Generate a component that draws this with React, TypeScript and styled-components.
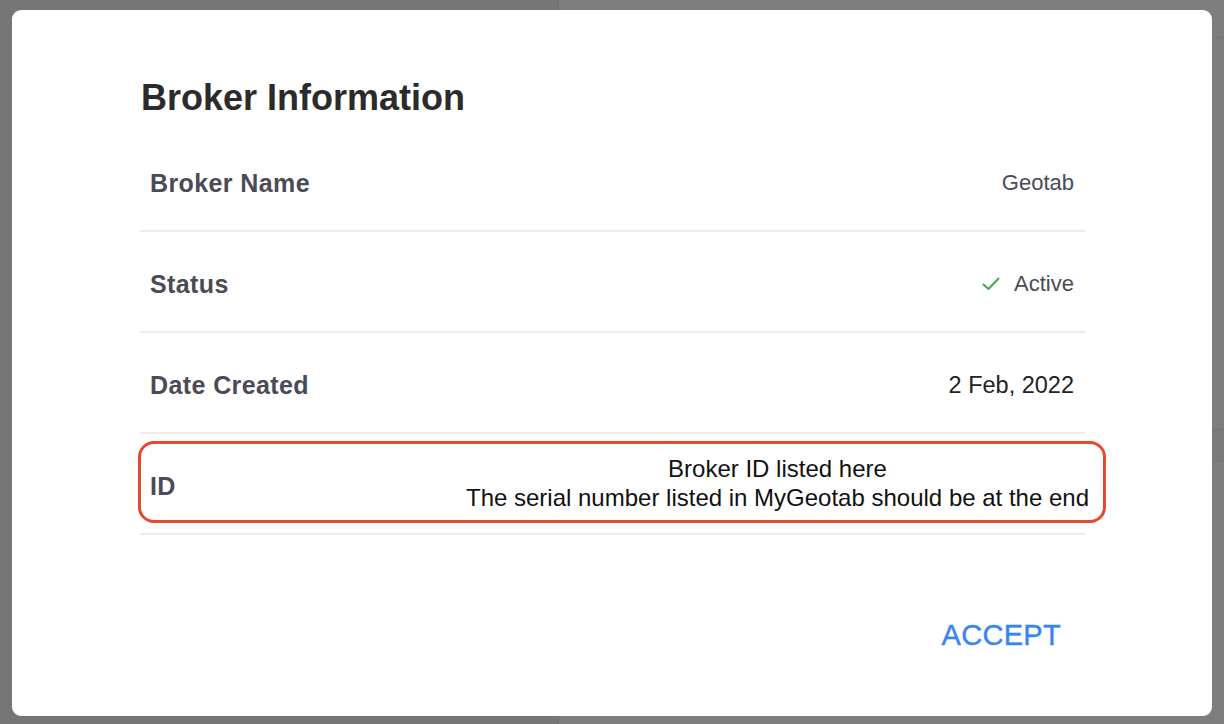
import styled, { createGlobalStyle } from 'styled-components'
import { FC, ReactNode } from 'react'

const GlobalStyle = createGlobalStyle`
  html, body {
    margin: 0;
    padding: 0;
    width: 1224px;
    height: 724px;
    overflow: hidden;
    font-family: 'Liberation Sans', Arial, sans-serif;
  }
`

const Page = styled.div`
  position: relative;
  width: 1224px;
  height: 724px;
  display: flex;
  background: #7e7e7e;
`

const Sidebar = styled.div`
  width: 558px;
  background: #767676;
  border-right: 1px solid #707070;
`

const Main = styled.div`
  flex: 1;
  display: flex;
  flex-direction: column;
`

const MainBar = styled.div<{ $height: number; $dark?: boolean }>`
  height: ${(p) => p.$height}px;
  background: ${(p) => (p.$dark ? '#7a7a7a' : 'transparent')};
  border-bottom: 1px solid #777777;
`

const Overlay = styled.div`
  position: absolute;
  inset: 10px 12px 8px 12px;
  display: flex;
`

const Dialog = styled.div`
  flex: 1;
  background: #ffffff;
  border-radius: 9px;
  padding: 66px 127px 0 128px;
  display: flex;
  flex-direction: column;
`

const Title = styled.h1`
  margin: 0 0 11px 1px;
  font-size: 36px;
  line-height: 44px;
  font-weight: 700;
  color: #2b2b2b;
`

const Rows = styled.div`
  display: flex;
  flex-direction: column;
`

const Row = styled.div`
  position: relative;
  height: 94px;
  display: flex;
  align-items: center;
  justify-content: space-between;
  padding: 5px 11px 0 10px;
  border-bottom: 2px solid #ececec;
`

const Label = styled.div`
  font-size: 25px;
  font-weight: 700;
  letter-spacing: 0.4px;
  color: #4a4b57;
`

const Value = styled.div<{ $dark?: boolean }>`
  display: flex;
  align-items: center;
  gap: 14px;
  font-size: ${(p) => (p.$dark ? '23.5px' : '22px')};
  color: ${(p) => (p.$dark ? '#222222' : '#4a4b57')};
`

const Note = styled.div`
  margin: 0 -15px 6px 0;
  text-align: center;
  font-size: 24px;
  line-height: 29px;
  color: #111111;
`

const Highlight = styled.div`
  position: absolute;
  left: -2px;
  right: -21px;
  top: 7px;
  bottom: 10px;
  border: 3px solid #e8482f;
  border-radius: 16px;
  pointer-events: none;
`

const Footer = styled.div`
  display: flex;
  justify-content: flex-end;
  padding-top: 80px;
`

const Button = styled.button`
  background: none;
  border: none;
  padding: 4px 24px;
  font-family: 'Liberation Sans', Arial, sans-serif;
  font-size: 29px;
  letter-spacing: 0.3px;
  color: #3a84f0;
  -webkit-text-stroke: 0.4px #3a84f0;
  cursor: pointer;
`

const Check: FC = () => (
  <svg width="18" height="14" viewBox="0 0 18 14" fill="none">
    <path d="M1.5 7.5 L6.5 12 L16.5 1.5" stroke="#47a84a" strokeWidth="2" strokeLinecap="round" strokeLinejoin="round" />
  </svg>
)

type InfoRowProps = {
  label: string
  children: ReactNode
  highlighted?: boolean
}

const InfoRow: FC<InfoRowProps> = ({ label, children, highlighted }) => (
  <Row>
    <Label>{label}</Label>
    {children}
    {highlighted && <Highlight />}
  </Row>
)

export default function App() {
  return (
    <>
      <GlobalStyle />
      <Page>
        <Sidebar />
        <Main>
          <MainBar $height={37} />
          <MainBar $height={390} />
          <MainBar $height={32} $dark />
        </Main>
        <Overlay>
          <Dialog>
            <Title>Broker Information</Title>
            <Rows>
              <InfoRow label="Broker Name">
                <Value>Geotab</Value>
              </InfoRow>
              <InfoRow label="Status">
                <Value>
                  <Check />
                  Active
                </Value>
              </InfoRow>
              <InfoRow label="Date Created">
                <Value $dark>2 Feb, 2022</Value>
              </InfoRow>
              <InfoRow label="ID" highlighted>
                <Note>
                  Broker ID listed here
                  <br />
                  The serial number listed in MyGeotab should be at the end
                </Note>
              </InfoRow>
            </Rows>
            <Footer>
              <Button>ACCEPT</Button>
            </Footer>
          </Dialog>
        </Overlay>
      </Page>
    </>
  )
}
